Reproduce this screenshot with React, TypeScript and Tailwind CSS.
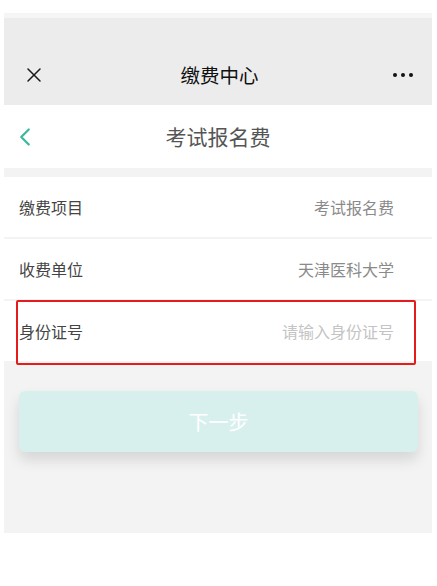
import React from "react";
import { X, ChevronLeft } from "lucide-react";

const font = { fontFamily: '"Noto Sans CJK SC", "Noto Sans", sans-serif' };

const rows = [
  { label: "缴费项目", value: "考试报名费", placeholder: false },
  { label: "收费单位", value: "天津医科大学", placeholder: false },
  { label: "身份证号", value: "请输入身份证号", placeholder: true },
];

export default function App() {
  return (
    <div className="w-[437px] h-[586px] bg-white overflow-hidden" style={font}>
      <div className="ml-[4px] w-[428px] pt-[13px]">
        {/* top strip */}
        <div className="h-[5px] bg-[#f5f5f5]" />

        {/* wechat header */}
        <div className="h-[87px] bg-[#ececec] flex items-end">
          <div className="h-[60px] w-full flex items-center justify-between pl-[18px] pr-[19px]">
            <X size={24} strokeWidth={1.5} className="text-[#1a1a1a]" />
            <span className="text-[19.5px] font-normal text-[#111]">缴费中心</span>
            <div className="flex gap-[4px]">
              <span className="w-[4px] h-[4px] rounded-full bg-[#111]" />
              <span className="w-[4px] h-[4px] rounded-full bg-[#111]" />
              <span className="w-[4px] h-[4px] rounded-full bg-[#111]" />
            </div>
          </div>
        </div>

        {/* page title */}
        <div className="relative h-[63px] bg-white flex items-center justify-center">
          <ChevronLeft
            size={30}
            strokeWidth={1.8}
            className="absolute left-[6px] top-[17px] text-[#3cb89f]"
          />
          <span className="text-[21px] text-[#555]">考试报名费</span>
        </div>

        {/* form */}
        <div className="bg-[#f3f3f3] pt-[9px] h-[365px]">
          <div className="relative flex flex-col gap-[2px]">
            {rows.map((r) => (
              <div
                key={r.label}
                className="h-[60px] bg-white flex items-center justify-between pl-[15px] pr-[38px]"
              >
                <span className="text-[16px] text-[#444]">{r.label}</span>
                <span
                  className={`text-[16px] ${r.placeholder ? "text-[#c4c4c4]" : "text-[#8a8a8a]"}`}
                >
                  {r.value}
                </span>
              </div>
            ))}
            <div className="absolute left-[12px] top-[123px] w-[400px] h-[65px] border-[2px] border-[#e51c1c] rounded-[2px]" />
          </div>

          <div className="px-[15px] pr-[14px] mt-[30px]">
            <button className="w-full h-[61px] rounded-[6px] bg-[#d8f0ed] text-white text-[20px] shadow-[0_8px_14px_rgba(0,0,0,0.12)]">
              下一步
            </button>
          </div>
        </div>
      </div>
    </div>
  );
}
